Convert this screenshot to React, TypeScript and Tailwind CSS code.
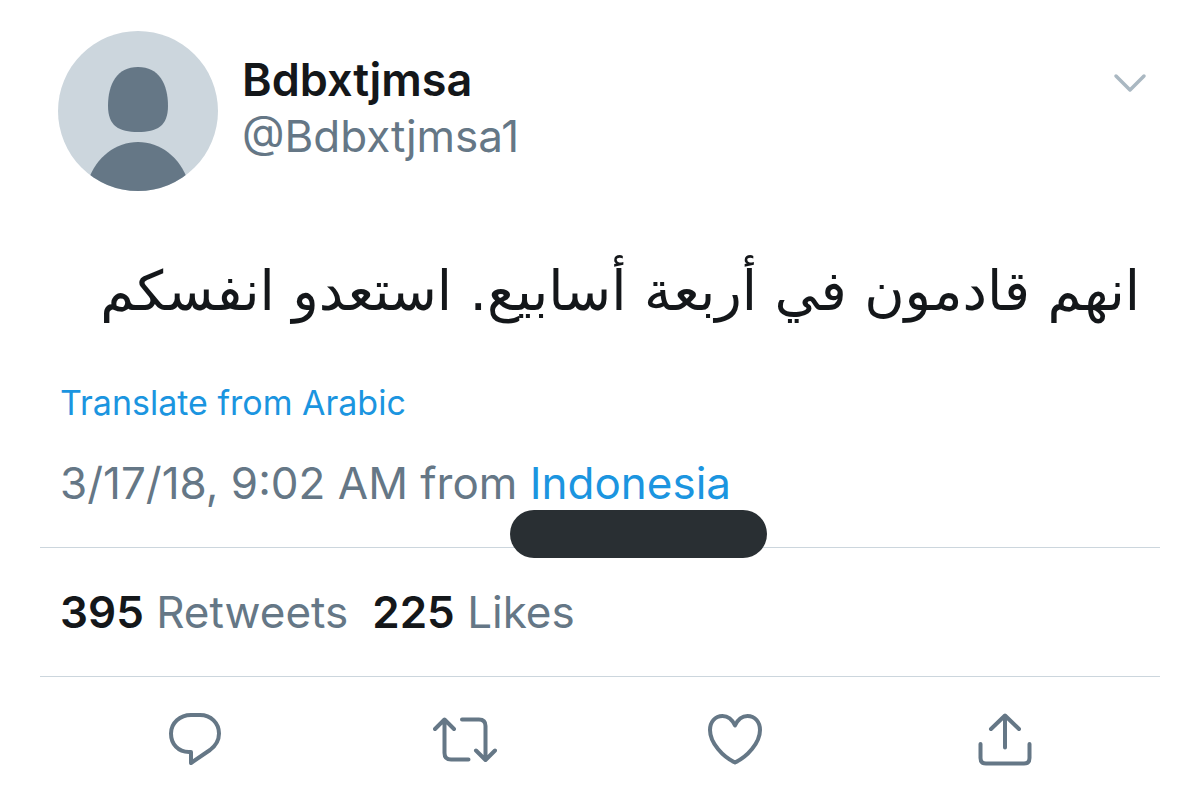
import type { ReactNode } from "react";

const Avatar = (): JSX.Element => (
  <svg className="size-40 shrink-0" viewBox="0 0 160 160" role="img" aria-label="Default profile picture">
    <defs>
      <clipPath id="avatar-circle">
        <circle cx="80" cy="80" r="80" />
      </clipPath>
    </defs>
    <g clipPath="url(#avatar-circle)">
      <rect width="160" height="160" fill="#ccd6dd" />
      <path
        d="M80 36C101 36 110 53 110 75C110 95 99 101 80 101S50 95 50 75C50 53 59 36 80 36Z"
        fill="#657786"
      />
      <path d="M30 150C38 126 58 111 80 111S122 126 130 150V160H30Z" fill="#657786" />
    </g>
  </svg>
);

const Icon = ({ children }: { children: ReactNode }): JSX.Element => (
  <svg
    className="h-14 w-16"
    viewBox="0 0 64 56"
    fill="none"
    stroke="currentColor"
    strokeWidth="4"
    strokeLinecap="round"
    strokeLinejoin="round"
    aria-hidden="true"
  >
    {children}
  </svg>
);

const actions = [
  {
    label: "Reply",
    icon: <path d="M28 4H37C48 4 56 12 56 22.500C56 29 53 34.500 47 39L28 52V41H26C15 41 8 33 8 22.500C8 12 17 4 28 4Z" />,
  },
  {
    label: "Retweet",
    icon: (
      <>
        <path d="M2 18L11.500 8.500L21 18M11.500 9V42Q11.500 48.500 18 48.500H35.500" />
        <path d="M29 8.500H46Q52.500 8.500 52.500 15V48M43 39.500L52.500 49L62 39.500" />
      </>
    ),
  },
  {
    label: "Like",
    icon: (
      <path d="M32 14.500C29 8 24 5 19.500 5C12 5 7 11 7 19C7 32 20 46 32 51.500C44 46 57 32 57 19C57 11 52 5 44.500 5C40 5 35 8 32 14.500Z" />
    ),
  },
  {
    label: "Share",
    icon: <path d="M18 18L32 4.500L46 18M32 5V36.500M7.500 33V47Q7.500 52.500 13 52.500H51Q56.500 52.500 56.500 47V33" />,
  },
];

const Stat = ({ count, label }: { count: number; label: string }): JSX.Element => (
  <a href="#" className="text-[#657786]">
    <strong className="font-semibold text-[#14171a]">{count}</strong> {label}
  </a>
);

const App = (): JSX.Element => {
  return (
    <main className="bg-white px-10 pt-[31px] pb-6 font-[Inter,'Liberation_Sans',sans-serif] text-[44px] leading-14 text-[#657786]">
      <article>
        <header className="flex pr-3 pl-[18px]">
          <Avatar />
          <div className="flex-1 pt-[21px] pl-6">
            <h1 className="text-[45px] font-semibold text-[#14171a]">Bdbxtjmsa</h1>
            <p>@Bdbxtjmsa1</p>
          </div>
          <button type="button" aria-label="More options" className="mt-[34px] size-9 text-[#aab8c2]">
            <svg
              viewBox="0 0 36 36"
              fill="none"
              stroke="currentColor"
              strokeWidth="3.500"
              strokeLinecap="round"
              strokeLinejoin="round"
            >
              <path d="M4 11L18 25L32 11" />
            </svg>
          </button>
        </header>

        <div className="px-5">
          <p dir="rtl" lang="ar" className="mt-13 font-['DejaVu_Sans',sans-serif] text-[55px] leading-24 text-[#14171a]">
            انهم قادمون في أربعة أسابيع. استعدو انفسكم
          </p>
          <button type="button" className="mt-10 block text-[34px] leading-12 text-[#1b95e0]">
            Translate from Arabic
          </button>
          <p className="mt-7 pb-9">
            3/17/18, 9:02 AM from{" "}
            <span className="relative">
              <a href="#" className="text-[#1b95e0]">
                Indonesia
              </a>
              <span className="absolute top-full -left-5 h-12 w-[257px] rounded-full bg-[#292f33]" />
            </span>
          </p>
        </div>

        <div className="flex gap-6 border-y border-[#ccd6dd] px-5 py-9">
          <Stat count={395} label="Retweets" />
          <Stat count={225} label="Likes" />
        </div>

        <div className="grid grid-cols-4 px-5 pt-[34px]">
          {actions.map(({ label, icon }) => (
            <button key={label} type="button" aria-label={label} className="flex justify-center">
              <Icon>{icon}</Icon>
            </button>
          ))}
        </div>
      </article>
    </main>
  );
};

export default App;
